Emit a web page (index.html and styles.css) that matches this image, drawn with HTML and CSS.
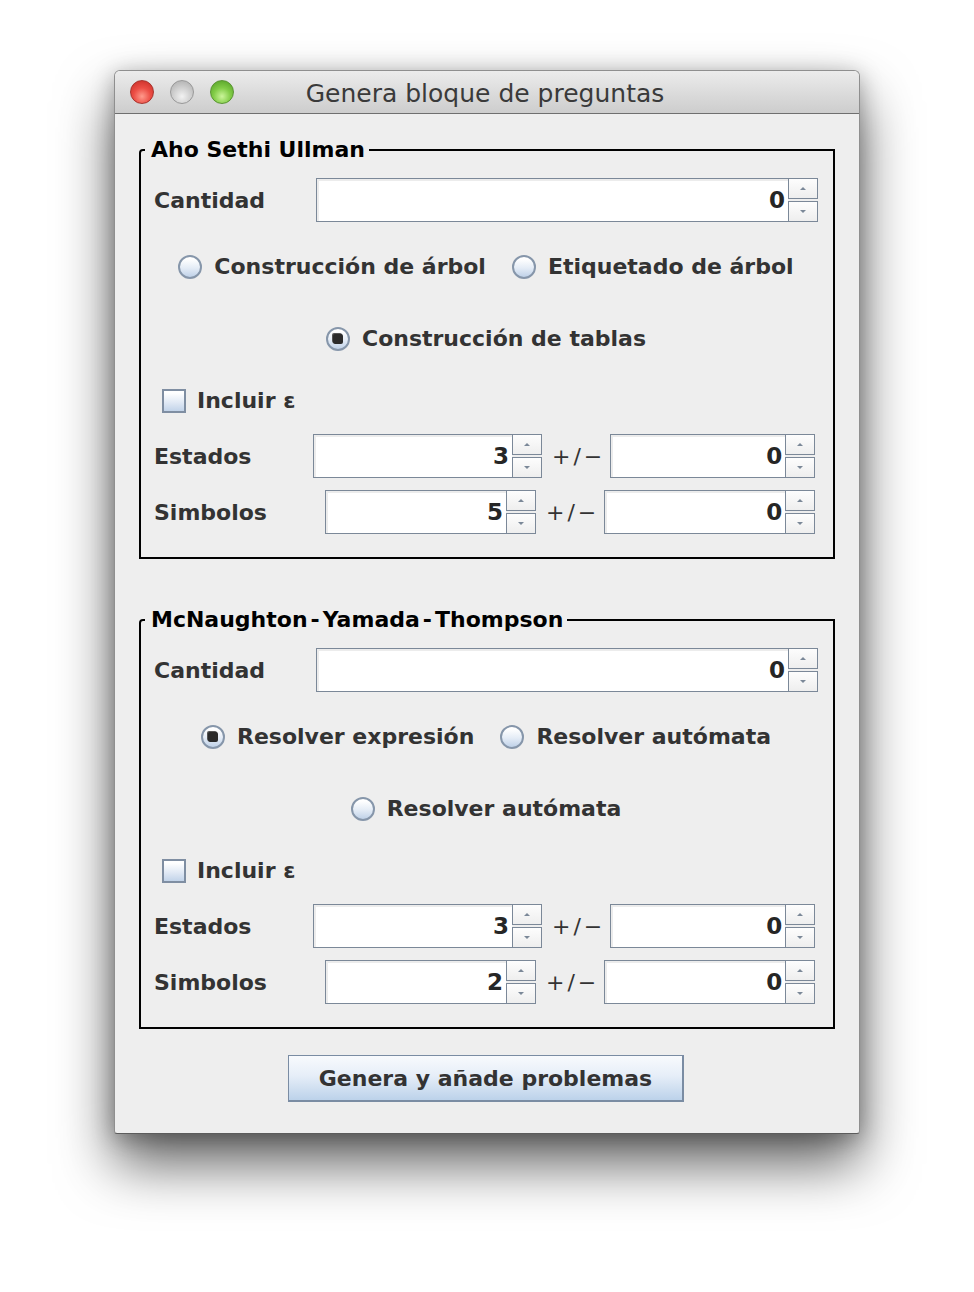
FILE: index.html
```html
<!DOCTYPE html>
<html lang="es">
<head>
<meta charset="utf-8">
<title>Genera bloque de preguntas</title>
<link rel="stylesheet" href="styles.css">
</head>
<body>
<div class="window">
  <div class="titlebar">
    <div class="lights">
      <span class="light red"></span>
      <span class="light gray"></span>
      <span class="light green"></span>
    </div>
    <div class="title">Genera bloque de preguntas</div>
    <div></div>
  </div>
  <div class="content">
    <fieldset class="group">
      <legend>Aho Sethi Ullman</legend>
      <div class="row r-cant">
        <span class="label lw-cant">Cantidad</span>
        <div class="spinner grow">
          <div class="field">0</div>
          <div class="arrows"><div class="arr"><i class="up"></i></div><div class="arr"><i class="down"></i></div></div>
        </div>
      </div>
      <div class="choices r-radio1">
        <label class="radio"><span class="dot"></span>Construcción de árbol</label>
        <label class="radio"><span class="dot"></span>Etiquetado de árbol</label>
      </div>
      <div class="choices r-radio2">
        <label class="radio"><span class="dot on"></span>Construcción de tablas</label>
      </div>
      <div class="row r-check">
        <label class="check"><span class="box"></span>Incluir ε</label>
      </div>
      <div class="row r-est">
        <span class="label lw-est">Estados</span>
        <div class="spinner sw-est">
          <div class="field">3</div>
          <div class="arrows"><div class="arr"><i class="up"></i></div><div class="arr"><i class="down"></i></div></div>
        </div>
        <span class="pm">+/−</span>
        <div class="spinner sw-est2">
          <div class="field">0</div>
          <div class="arrows"><div class="arr"><i class="up"></i></div><div class="arr"><i class="down"></i></div></div>
        </div>
      </div>
      <div class="row r-sim">
        <span class="label lw-sim">Simbolos</span>
        <div class="spinner sw-sim">
          <div class="field">5</div>
          <div class="arrows"><div class="arr"><i class="up"></i></div><div class="arr"><i class="down"></i></div></div>
        </div>
        <span class="pm">+/−</span>
        <div class="spinner sw-sim">
          <div class="field">0</div>
          <div class="arrows"><div class="arr"><i class="up"></i></div><div class="arr"><i class="down"></i></div></div>
        </div>
      </div>
    </fieldset>

    <fieldset class="group second">
      <legend>McNaughton<span class="hy">-</span>Yamada<span class="hy">-</span>Thompson</legend>
      <div class="row r-cant">
        <span class="label lw-cant">Cantidad</span>
        <div class="spinner grow">
          <div class="field">0</div>
          <div class="arrows"><div class="arr"><i class="up"></i></div><div class="arr"><i class="down"></i></div></div>
        </div>
      </div>
      <div class="choices r-radio1">
        <label class="radio"><span class="dot on"></span>Resolver expresión</label>
        <label class="radio"><span class="dot"></span>Resolver autómata</label>
      </div>
      <div class="choices r-radio2">
        <label class="radio"><span class="dot"></span>Resolver autómata</label>
      </div>
      <div class="row r-check">
        <label class="check"><span class="box"></span>Incluir ε</label>
      </div>
      <div class="row r-est">
        <span class="label lw-est">Estados</span>
        <div class="spinner sw-est">
          <div class="field">3</div>
          <div class="arrows"><div class="arr"><i class="up"></i></div><div class="arr"><i class="down"></i></div></div>
        </div>
        <span class="pm">+/−</span>
        <div class="spinner sw-est2">
          <div class="field">0</div>
          <div class="arrows"><div class="arr"><i class="up"></i></div><div class="arr"><i class="down"></i></div></div>
        </div>
      </div>
      <div class="row r-sim">
        <span class="label lw-sim">Simbolos</span>
        <div class="spinner sw-sim">
          <div class="field">2</div>
          <div class="arrows"><div class="arr"><i class="up"></i></div><div class="arr"><i class="down"></i></div></div>
        </div>
        <span class="pm">+/−</span>
        <div class="spinner sw-sim">
          <div class="field">0</div>
          <div class="arrows"><div class="arr"><i class="up"></i></div><div class="arr"><i class="down"></i></div></div>
        </div>
      </div>
    </fieldset>

    <div class="actions">
      <button class="btn" type="button">Genera y añade problemas</button>
    </div>
  </div>
</div>
</body>
</html>
```
FILE: styles.css
```css
html, body {
  margin: 0;
  padding: 0;
  background: #ffffff;
}
html {
  min-height: 1292px;
}
body {
  min-height: 1292px;
  box-sizing: border-box;
  padding: 70px 0 0 114px;
  font-family: "DejaVu Sans", "Noto Sans", sans-serif;
}
.window {
  width: 746px;
  box-sizing: border-box;
  background: #eeeeee;
  border: 1px solid #8f8f8f;
  border-bottom-color: #5c5c5c;
  border-radius: 6px 6px 3px 3px;
  box-shadow: 0 30px 56px rgba(0, 0, 0, 0.62), 0 4px 22px rgba(0, 0, 0, 0.28);
  overflow: hidden;
}
.titlebar {
  height: 42px;
  display: grid;
  grid-template-columns: 1fr auto 1fr;
  align-items: center;
  background: linear-gradient(#ececec, #d9d9d9 60%, #cdcdcd);
  border-bottom: 1px solid #6f6f6f;
}
.lights {
  display: flex;
  gap: 16px;
  padding-left: 15px;
}
.light {
  width: 24px;
  height: 24px;
  border-radius: 50%;
  box-sizing: border-box;
}
.light.red {
  background: radial-gradient(circle at 50% 70%, #ff9a8c 0%, #ec4e45 45%, #c42a23 100%);
  border: 1px solid #a7342e;
}
.light.gray {
  background: radial-gradient(circle at 50% 70%, #f2f2f2 0%, #cdcdcd 50%, #a9a9a9 100%);
  border: 1px solid #999999;
}
.light.green {
  background: radial-gradient(circle at 50% 70%, #cbf59a 0%, #82cc47 45%, #4f9b22 100%);
  border: 1px solid #5a9434;
}
.title {
  font-size: 25px;
  color: #3a3a3a;
  white-space: nowrap;
  padding-top: 2px;
  margin-left: -4px;
}
.content {
  padding: 21px 24px 31px 24px;
}
.group {
  margin: 0;
  min-width: 0;
  border: 2px solid #000000;
  border-radius: 4px 0 0 0;
  padding: 14px 15px 23px 13px;
}
.group.second {
  margin-top: 46px;
}
legend {
  font-size: 22px;
  line-height: 28px;
  font-weight: bold;
  color: #000000;
  padding: 1px 4px 0 6px;
  margin-left: -9px;
}
legend .hy {
  padding: 0 3px;
}
.row {
  display: flex;
  align-items: center;
}
.label {
  font-size: 22px;
  font-weight: bold;
  color: #333333;
  flex: none;
}
.lw-cant { width: 162px; }
.lw-est { width: 159px; }
.lw-sim { width: 171px; }
.r-radio1 { margin-top: 31px; }
.r-radio2 { margin-top: 44px; }
.r-check { margin-top: 34px; padding-left: 8px; }
.r-est { margin-top: 19px; }
.r-sim { margin-top: 12px; }
.choices {
  display: flex;
  justify-content: center;
  gap: 26px;
  height: 28px;
  align-items: center;
}
.radio, .check {
  display: flex;
  align-items: center;
  gap: 12px;
  font-size: 22px;
  font-weight: bold;
  color: #333333;
  white-space: nowrap;
  line-height: 28px;
}
.check { gap: 11px; }
.dot {
  width: 24px;
  height: 24px;
  box-sizing: border-box;
  border-radius: 50%;
  border: 2px solid #8696aa;
  background: linear-gradient(#ffffff 10%, #e4ecf6 55%, #bfd1e8);
  display: flex;
  align-items: center;
  justify-content: center;
}
.dot.on::after {
  content: "";
  width: 10px;
  height: 10px;
  border-radius: 2px;
  background: #2b2b2b;
  box-shadow: -1px -1px 0 #555;
}
.box {
  width: 24px;
  height: 24px;
  box-sizing: border-box;
  border: 2px solid #7f8ea2;
  background: linear-gradient(#ffffff 10%, #e2eaf5 55%, #c2d3e9);
}
.spinner {
  display: flex;
  height: 44px;
  flex: none;
}
.spinner.grow { flex: 1; }
.sw-est { width: 229px; }
.sw-est2 { width: 205px; }
.sw-sim { width: 211px; }
.field {
  flex: 1;
  min-width: 0;
  box-sizing: border-box;
  border: 1px solid #7b8898;
  border-right: none;
  background: #ffffff;
  box-shadow: inset 2px 2px 0 #ececec;
  font-size: 23px;
  font-weight: bold;
  color: #262626;
  text-align: right;
  line-height: 42px;
  padding-right: 3px;
}
.arrows {
  width: 30px;
  display: flex;
  flex-direction: column;
  gap: 2px;
}
.arr {
  height: 21px;
  box-sizing: border-box;
  border: 1px solid #7b8898;
  background: linear-gradient(#fdfdfd, #eeeeee);
  display: flex;
  align-items: center;
  justify-content: center;
}
.arr i {
  width: 0;
  height: 0;
  border-left: 3px solid transparent;
  border-right: 3px solid transparent;
}
.arr i.up { border-bottom: 3px solid #7b8898; }
.arr i.down { border-top: 3px solid #7b8898; }
.pm {
  font-size: 22px;
  color: #333333;
  letter-spacing: 3px;
  margin: 0 5px 0 10px;
  white-space: nowrap;
}
.actions {
  display: flex;
  justify-content: center;
  margin-top: 26px;
}
.btn {
  width: 396px;
  height: 47px;
  border: 1px solid #7a8ca3;
  border-bottom-width: 2px;
  border-right-width: 2px;
  border-radius: 0;
  background: linear-gradient(#f8fafd, #e6eef8 45%, #bcd2ea);
  font-family: "DejaVu Sans", "Noto Sans", sans-serif;
  font-size: 22px;
  font-weight: bold;
  color: #333333;
  padding: 0;
  margin-left: -2px;
}
```
